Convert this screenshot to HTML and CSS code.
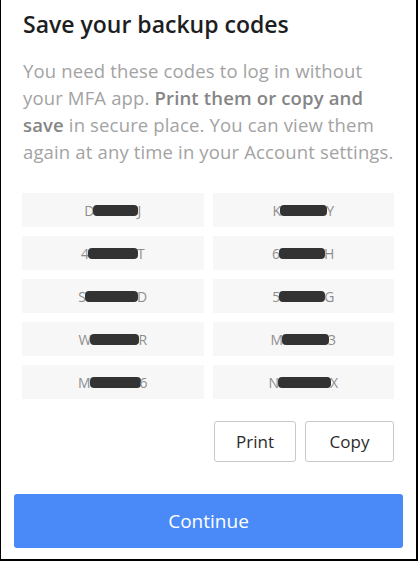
FILE: index.html
```html
<!DOCTYPE html>
<html lang="en">
<head>
    <meta charset="UTF-8">
    <meta name="viewport" content="width=device-width, initial-scale=1.0">
    <title>Save your backup codes</title>
    <link rel="stylesheet" href="styles.css">
</head>
<body>
    <div class="frame">
        <h1 class="title">Save your backup codes</h1>

        <p class="intro">
            You need these codes to log in without your MFA app.
            <strong>Print them or copy and save</strong> in secure place.
            You can view them again at any time in your Account settings.
        </p>

        <!-- Backup codes (masked) -->
        <div class="codes">
            <div class="code">D<span class="mask" style="width: 45px"></span>J</div>
            <div class="code">K<span class="mask" style="width: 47px"></span>Y</div>
            <div class="code">4<span class="mask" style="width: 50px"></span>T</div>
            <div class="code">6<span class="mask" style="width: 46px"></span>H</div>
            <div class="code">S<span class="mask" style="width: 53px"></span>D</div>
            <div class="code">5<span class="mask" style="width: 46px"></span>G</div>
            <div class="code">W<span class="mask" style="width: 49px"></span>R</div>
            <div class="code">M<span class="mask" style="width: 47px"></span>3</div>
            <div class="code">M<span class="mask" style="width: 51px"></span>6</div>
            <div class="code">N<span class="mask" style="width: 53px"></span>X</div>
        </div>

        <div class="actions">
            <button class="btn-outline btn-print">Print</button>
            <button class="btn-outline btn-copy">Copy</button>
        </div>

        <button class="btn-continue">Continue</button>
    </div>
</body>
</html>
```

FILE: styles.css
```css
/* Global */
body {
    margin: 0;
    padding: 0;
    font-family: 'Open Sans', 'Noto Sans', sans-serif;
    background-color: #fff;
    color: #1f2024;
}

.frame {
    box-sizing: border-box;
    width: 418px;
    height: 561px;
    border-left: 1px solid #000;
    border-right: 2px solid #000;
    border-bottom: 2px solid #000;
    padding: 0 21px 0 21px;
    display: flex;
    flex-direction: column;
}

/* Heading */
.title {
    font-size: 23px;
    font-weight: 600;
    line-height: 30px;
    margin: 9px 0 0 1px;
    color: #1d1e22;
}

.intro {
    font-size: 18.5px;
    letter-spacing: 0.15px;
    line-height: 27px;
    color: #a3a3a3;
    margin: 18px -8px 0 1px;
}

.intro strong {
    color: #858585;
    font-weight: 600;
}

/* Codes grid */
.codes {
    display: grid;
    grid-template-columns: 1fr 1fr;
    column-gap: 9px;
    row-gap: 9px;
    margin-top: 28px;
    margin-right: 1px;
}

.code {
    height: 34px;
    background-color: #f7f7f7;
    display: flex;
    align-items: center;
    justify-content: center;
    font-size: 14px;
    color: #8e8e8e;
}

.mask {
    display: inline-block;
    height: 11px;
    background-color: #333;
    border-radius: 4px;
    margin: 0 -1px;
}

/* Buttons */
.actions {
    display: flex;
    justify-content: flex-end;
    gap: 9px;
    margin-top: 22px;
    margin-right: 1px;
}

.btn-outline {
    height: 41px;
    background: #fff;
    border: 1px solid #c8c8c8;
    border-radius: 3px;
    font-family: inherit;
    font-size: 17px;
    font-weight: 500;
    color: #2b2b2b;
    cursor: pointer;
}

.btn-print {
    width: 82px;
}

.btn-copy {
    width: 89px;
}

.btn-continue {
    margin: 32px -8px 0 -8px;
    height: 54px;
    background-color: #4a8af8;
    border: none;
    border-radius: 3px;
    color: #fff;
    font-family: inherit;
    font-size: 19px;
    font-weight: 500;
    cursor: pointer;
}

.btn-continue:hover {
    background-color: #3b7de9;
}
```
